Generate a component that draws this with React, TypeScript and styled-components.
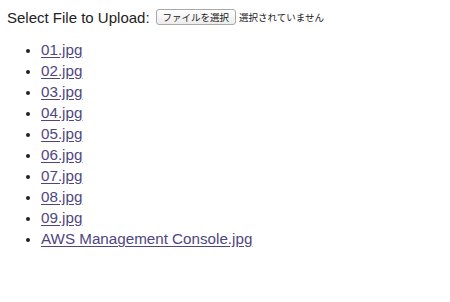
import styled, { createGlobalStyle } from 'styled-components';

const GlobalStyle = createGlobalStyle`
  html, body {
    margin: 0;
    padding: 0;
    background: #ffffff;
  }
  body {
    font-family: "Liberation Sans", "Noto Sans CJK JP", sans-serif;
    color: #222222;
  }
`;

const Page = styled.div`
  padding: 8px 0 0 7px;
`;

const UploadForm = styled.form`
  display: flex;
  align-items: center;
  height: 18px;
  font-size: 15px;
`;

const Label = styled.span`
  margin-right: 6px;
`;

const FileButton = styled.button`
  font-family: "Noto Sans CJK JP", sans-serif;
  font-size: 9.5px;
  line-height: 12px;
  height: 16px;
  padding: 0 6px;
  border: 1px solid #a9a9a9;
  border-radius: 3px;
  background: linear-gradient(#ffffff, #ececec);
  color: #222222;
`;

const FileStatus = styled.span`
  font-family: "Noto Sans CJK JP", sans-serif;
  font-size: 9.5px;
  margin-left: 3px;
`;

const FileList = styled.ul`
  margin: 13px 0 0;
  padding-left: 34px;
  font-size: 15.2px;
  line-height: 21px;
`;

const FileItem = styled.li`
  &::marker {
    font-size: 14px;
  }
`;

const FileLink = styled.a`
  color: #4f4680;
  text-decoration: underline;
  text-underline-offset: 2px;
`;

const files = [
  '01.jpg',
  '02.jpg',
  '03.jpg',
  '04.jpg',
  '05.jpg',
  '06.jpg',
  '07.jpg',
  '08.jpg',
  '09.jpg',
  'AWS Management Console.jpg',
];

const App = () => {
  return (
    <>
      <GlobalStyle />
      <Page>
        <UploadForm>
          <Label>Select File to Upload:</Label>
          <FileButton type="button">ファイルを選択</FileButton>
          <FileStatus>選択されていません</FileStatus>
        </UploadForm>
        <FileList>
          {files.map((name) => (
            <FileItem key={name}>
              <FileLink href="#">{name}</FileLink>
            </FileItem>
          ))}
        </FileList>
      </Page>
    </>
  );
};

export default App;
